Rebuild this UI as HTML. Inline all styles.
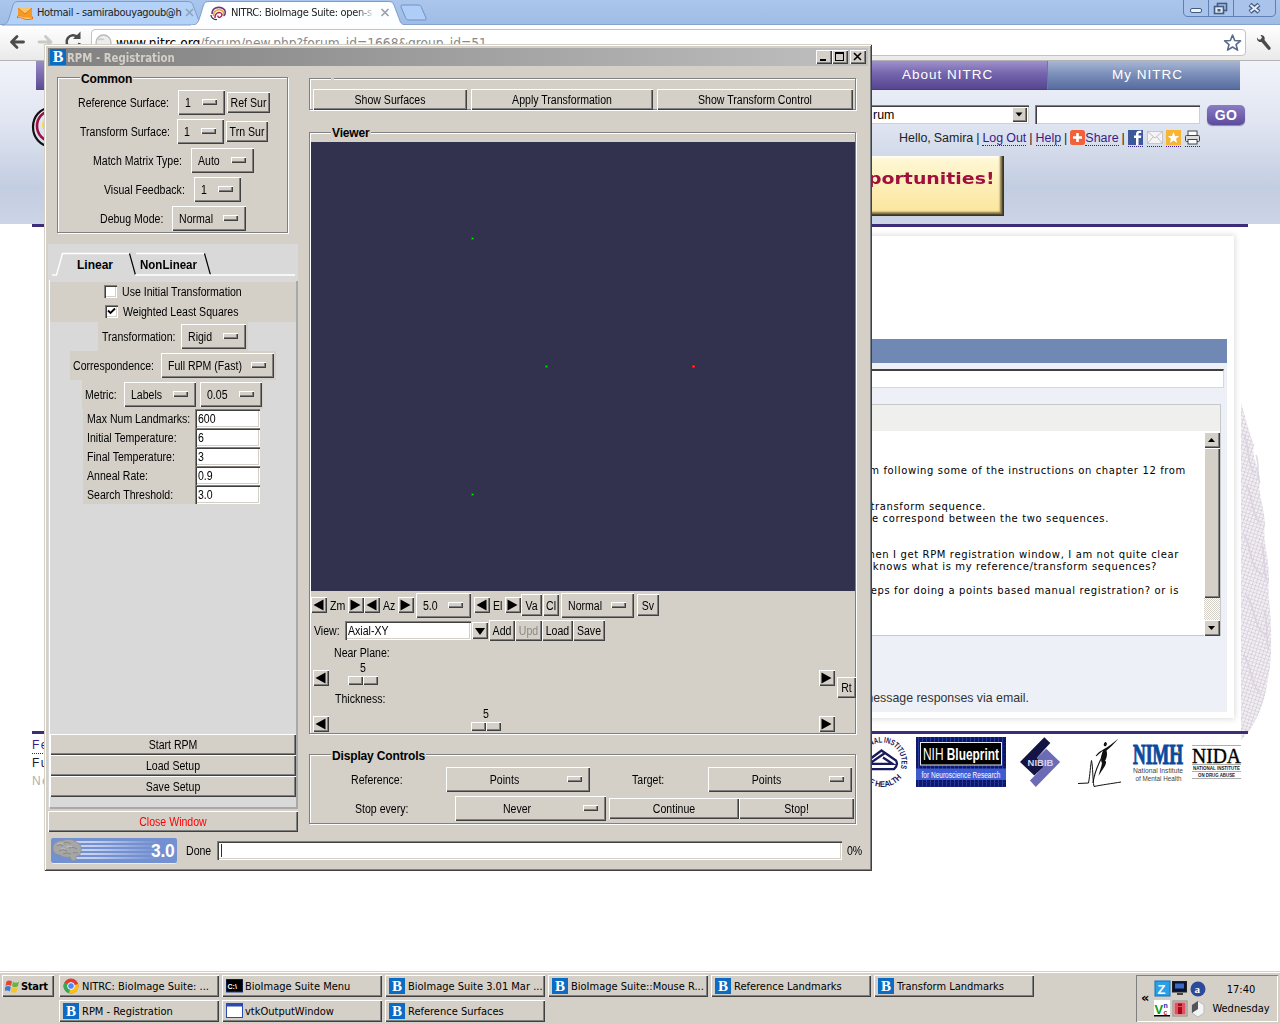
<!DOCTYPE html>
<html><head><meta charset="utf-8"><title>RPM - Registration</title>
<style>
*{box-sizing:border-box;margin:0;padding:0}
html,body{width:1280px;height:1024px;overflow:hidden;background:#fff}
body{position:relative;font-family:"Liberation Sans",sans-serif;font-size:12px;color:#000}
.a{position:absolute}
.t{position:absolute;white-space:nowrap;line-height:14px;height:14px;transform:scaleX(.88);transform-origin:0 50%}
.btn{position:absolute;background:#d4d0c8;box-shadow:inset 1px 1px 0 #fff,inset -1px -1px 0 #404040,inset -2px -2px 0 #808080;white-space:nowrap;overflow:hidden}
.btn span{position:absolute;left:-20px;right:-20px;text-align:center;line-height:14px;transform:scaleX(.88)}
.om{position:absolute;background:#d4d0c8;box-shadow:inset 1px 1px 0 #fff,inset -1px -1px 0 #404040,inset -2px -2px 0 #808080;white-space:nowrap}
.om i{position:absolute;width:15px;height:6px;background:#d4d0c8;box-shadow:inset 1px 1px 0 #fff,inset -1px -1px 0 #404040,inset -2px -2px 0 #808080}
.om span{position:absolute;line-height:14px;transform:scaleX(.88);transform-origin:0 50%}
.om span.c{transform-origin:50% 50%}
.grv{position:absolute;border:1px solid #808080;box-shadow:inset 1px 1px 0 #fff,1px 1px 0 #fff}
.ent{position:absolute;background:#fff;box-shadow:inset 1px 1px 0 #808080,inset 2px 2px 0 #404040,inset -1px -1px 0 #fff,inset -2px -2px 0 #d4d0c8}
.ent span{position:absolute;left:3px;line-height:14px;transform:scaleX(.88);transform-origin:0 50%}
.gl{position:absolute;background:#d4d0c8;font-weight:bold;font-size:12px;line-height:15px;height:15px;padding:0 1px;white-space:nowrap;letter-spacing:-0.15px}
.arr{position:absolute;width:16px;height:16px;background:#d4d0c8;box-shadow:inset 1px 1px 0 #fff,inset -1px -1px 0 #404040,inset -2px -2px 0 #808080}
.arr svg{position:absolute;left:0;top:0}
.tb{position:absolute;background:#d4d0c8;box-shadow:inset 1px 1px 0 #fff,inset -1px -1px 0 #404040,inset -2px -2px 0 #808080;font-family:"DejaVu Sans Condensed","DejaVu Sans",sans-serif;font-size:11px;line-height:20px;white-space:nowrap;overflow:hidden}
.tb b{position:absolute;left:4px;top:3px;width:16px;height:16px;background:#0a6cc4;color:#fff;font:bold 15px/16px "Liberation Serif",serif;text-align:center}
.tb span{position:absolute;left:23px;top:0}
.pg{font-family:"Liberation Sans",sans-serif}
.lnk{color:#3a1a8a;border-bottom:1px dotted #3a1a8a}
</style></head><body>
<!-- browser chrome -->
<div class="a" style="left:0;top:0;width:1280px;height:25px;background:linear-gradient(#abc6ec,#9fbce5)"></div>
<div class="a" style="left:0;top:24px;width:1280px;height:1px;background:#86a3cf"></div>
<div class="a" style="left:0;top:25px;width:1280px;height:36px;background:linear-gradient(#fff,#f4f4f4 50%,#e9e9e9)"></div>
<div class="a" style="left:0;top:60px;width:1280px;height:1px;background:#b4b4b4"></div>
<svg class="a" style="left:0;top:0" width="440" height="26">
<path d="M2 25 C8 24 8 21 10 15 L13 5 C14 2 16 1.5 19 1.5 L187 1.5 C190 1.5 192 2 193 5 L199 21 C200 24 202 25 206 25 Z" fill="#b4d1f8" stroke="#7f9dca" stroke-width="1"/>
<path d="M401 7 C400.5 5.5 401 5 403 5 L418 5 C420 5 421 6 421.5 7.5 L426 18 C426.5 19.5 426 20 424 20 L409 20 C407 20 406 19 405.5 17.5 Z" fill="#aecdf7" stroke="#7391c6" stroke-width="1"/>
<path d="M192 25.5 C198 24.5 198.5 21 200.5 15 L203.5 5 C204.5 2 206.5 1.5 209.5 1.5 L388 1.5 C391 1.5 393 2 394 5 L400 21 C401 24 403 25 409 25.5 Z" fill="#fdfeff" stroke="#7f9dca" stroke-width="1"/>
<rect x="191" y="25" width="220" height="1.6" fill="#fff"/>
<!-- hotmail icon -->
<g transform="translate(17,7)"><path d="M1 1 H15 V10 H1Z" fill="#f59a23"/><path d="M1 1 L8 7 L15 1" fill="#fbc36a" stroke="#e06f10" stroke-width="0.8"/><path d="M0 9 C3 7.5 5 9.5 8 10.5 C11 11.5 13 10 16 9.5 V12 C12 13 10 13.5 7.5 12.5 C5 11.5 3 10.5 0 11.5Z" fill="#f36c0c"/><path d="M1 10 C4 9 6 11 9 11.5 C11 12 13 11 15 10.8" stroke="#ffe08a" stroke-width="0.9" fill="none"/></g>
<!-- nitrc favicon -->
<g transform="translate(210,5)"><path d="M2 9 C2 3 8 1 13 3.5 C16 5 16 9 13.5 11" fill="none" stroke="#6a3a7a" stroke-width="1.6"/><path d="M3.5 11 C3 6 8 3.5 12 5.5 C14 6.5 14 9 12.5 10.5" fill="none" stroke="#e7a53a" stroke-width="1.5"/><path d="M5 13 C4.5 8.5 8.5 6.5 11 8 C12.5 9 12 11 10.5 12 C9 13 7.5 12 8 10.5" fill="none" stroke="#b02050" stroke-width="1.4"/><path d="M1 10 C1 13 4 15 7 14.5" fill="none" stroke="#303030" stroke-width="1.2"/></g>
<!-- close x -->
<path d="M186 9 L193 16 M193 9 L186 16" stroke="#8fa3bf" stroke-width="1.7"/>
<path d="M381.5 9 L388.5 16 M388.5 9 L381.5 16" stroke="#9aa2ad" stroke-width="1.7"/>
</svg>
<div class="t" style="left:37px;top:6px;font:11px/14px 'DejaVu Sans Condensed','DejaVu Sans',sans-serif;transform:none;letter-spacing:-0.35px;color:#222">Hotmail - samirabouyagoub@h</div>
<div class="t" style="left:231px;top:6px;font:11px/14px 'DejaVu Sans Condensed','DejaVu Sans',sans-serif;transform:none;letter-spacing:-0.35px;color:#222;width:147px;overflow:hidden;-webkit-mask-image:linear-gradient(90deg,#000 125px,transparent 145px);mask-image:linear-gradient(90deg,#000 125px,transparent 145px)">NITRC: BioImage Suite: open-s</div>
<svg class="a" style="left:1180px;top:0" width="100" height="20">
<path d="M3.5 0 V12 C3.5 15 5 16.5 8 16.5 H91 C94 16.5 95.5 15 95.5 12 V0" fill="#a9c3ea" stroke="#5f7fb5" stroke-width="1"/>
<path d="M28.5 0 V16 M53.5 0 V16" stroke="#5f7fb5" stroke-width="1"/>
<rect x="10.5" y="8.5" width="11" height="4" rx="1.5" fill="#eef3fb" stroke="#445a80" stroke-width="1"/>
<rect x="37.5" y="3.5" width="9" height="7" fill="none" stroke="#445a80" stroke-width="1.6"/>
<rect x="34.5" y="6.5" width="9" height="7" fill="#dfe8f6" stroke="#445a80" stroke-width="1.6"/>
<rect x="37.5" y="9" width="3" height="2.5" fill="#445a80"/>
<path d="M70 4.5 L79 12 M79 4.5 L70 12" stroke="#445a80" stroke-width="4.4"/>
<path d="M70.5 5 L78.5 11.5 M78.5 5 L70.5 11.5" stroke="#e8eef9" stroke-width="2"/>
</svg>
<svg class="a" style="left:0;top:26px" width="130" height="34">
<path d="M23.5 16 H12.5 M17 10.5 L11.5 16 L17 21.5" fill="none" stroke="#4b4b4b" stroke-width="2.8" stroke-linecap="round" stroke-linejoin="round"/>
<path d="M39 16 H50 M45.5 10.5 L51 16 L45.5 21.5" fill="none" stroke="#c9c9c9" stroke-width="2.8" stroke-linecap="round" stroke-linejoin="round"/>
<path d="M78 11.5 A6.5 6.5 0 1 0 79.5 17" fill="none" stroke="#4b4b4b" stroke-width="2.6"/>
<path d="M80.5 5.5 V13 H73 Z" fill="#4b4b4b"/>
</svg>
<div class="a" style="left:91px;top:29px;width:1155px;height:27px;background:#fff;border:1px solid #c3c3c3;border-radius:4px"></div>
<svg class="a" style="left:95px;top:34px" width="18" height="18"><circle cx="8.5" cy="8.5" r="7.5" fill="#ececec" stroke="#b9b9b9" stroke-width="1.3"/><path d="M3 6 C6 3 7 7 9 5 M5 12 C8 10 9 13 12 11" stroke="#c9c9c9" fill="none" stroke-width="1.5"/></svg>
<div class="t" style="left:116px;top:35px;font:13.65px/16px 'DejaVu Sans Condensed','DejaVu Sans',sans-serif;height:16px;transform:none;color:#000"><span>www.nitrc.org</span><span style='color:#8a8a8a'>/forum/new.php?forum_id=1668&amp;group_id=51</span></div>
<svg class="a" style="left:1222px;top:32px" width="58" height="22">
<path transform="translate(1.3,1.4) scale(.88)" d="M10.5 2 L13 8 L19.5 8.5 L14.5 12.7 L16.2 19 L10.5 15.5 L4.8 19 L6.5 12.7 L1.5 8.5 L8 8 Z" fill="#fff" stroke="#5a6a8c" stroke-width="1.8" stroke-linejoin="round"/>
<g transform="translate(33,2)"><path d="M2 3.5 C1.5 6.5 4 8.5 6.5 8 L13 15.5 C14 16.7 16.5 15 15.5 13.5 L9.5 6 C10.5 3 8.5 0.8 5.5 1 L7 3.5 L5.5 5.5 L3.5 5.5 Z" fill="#4a4a4a"/></g>
</svg>
<!-- web page -->
<div class="a" style="left:0;top:61px;width:1280px;height:163px;background:linear-gradient(#f1f3fa,#e0e5f1 38%,#c3cde1 78%,#ccd4e6)"></div>
<div class="a" style="left:32px;top:224px;width:1216px;height:3px;background:#3d2c78;"></div>
<div class="a" style="left:36px;top:61px;width:20px;height:29px;background:linear-gradient(#9a8bc8,#5a4a94)"></div>
<svg class="a" style="left:28px;top:104px" width="30" height="46"><ellipse cx="22" cy="23" rx="17" ry="19" fill="none" stroke="#111" stroke-width="2.2"/><ellipse cx="23" cy="22" rx="14" ry="15" fill="none" stroke="#9a1040" stroke-width="2.6"/><ellipse cx="24" cy="21" rx="10" ry="9" fill="#f4e020"/></svg>
<div class="a pg" style="left:850px;top:61px;width:197px;height:29px;background:linear-gradient(#9f90cc,#7465ae 45%,#57468f);border-bottom:1px solid #4a3a80"></div>
<div class="a pg" style="left:1047px;top:61px;width:193px;height:29px;background:linear-gradient(#a9b7d6,#7d90ba 45%,#566d9f);border-bottom:1px solid #4a6090;border-left:1px solid #6a78a8"></div>
<div class="t" style="left:902px;top:67px;font:13.5px/16px 'Liberation Sans',sans-serif;height:16px;color:#fff;letter-spacing:1px;transform:none">About NITRC</div>
<div class="t" style="left:1112px;top:67px;font:13.5px/16px 'Liberation Sans',sans-serif;height:16px;color:#fff;letter-spacing:1px;transform:none">My NITRC</div>
<div class="a" style="left:850px;top:105px;width:179px;height:19px;background:#fff;box-shadow:inset 1px 1px 0 #808080,inset 2px 2px 0 #404040,inset -1px -1px 0 #d4d0c8"></div>
<div class="t" style="left:873px;top:108px;font:12.4px/14px 'Liberation Sans',sans-serif;transform:none">rum</div>
<div class="btn" style="left:1012px;top:107px;width:15px;height:15px;box-shadow:inset 1px 1px 0 #fff,inset -1px -1px 0 #404040,inset -2px -2px 0 #808080"><svg class="a" style="left:0;top:0" width="15" height="15"><polygon points="3.5,5.5 10.5,5.5 7,9.5" fill="#000"/></svg></div>
<div class="a" style="left:1035px;top:105px;width:165px;height:19px;background:#fff;box-shadow:inset 1px 1px 0 #808080,inset 2px 2px 0 #404040,inset -1px -1px 0 #d4d0c8"></div>
<div class="a" style="left:1207px;top:105px;width:38px;height:20px;border-radius:5px;background:linear-gradient(#8a7cc4,#5d4c9c);box-shadow:0 1px 1px #8088a8;color:#fff;font:bold 14px/20px 'Liberation Sans',sans-serif;text-align:center;letter-spacing:.3px">GO</div>
<div class="t" style="left:899px;top:131px;font:12.45px/14px 'Liberation Sans',sans-serif;transform:none;color:#222;word-spacing:-0.45px">Hello, Samira | <span class='lnk'>Log Out</span> | <span class='lnk'>Help</span> | <span style='display:inline-block;width:15px'></span><span class='lnk'>Share</span> |</div>
<svg class="a" style="left:1068px;top:128px" width="140" height="20">
<rect x="2" y="2" width="15" height="15" rx="2.5" fill="#f0623a"/><path d="M9.5 5 V14 M5 9.5 H14" stroke="#fff" stroke-width="2.6"/>
<rect x="60" y="2" width="15" height="15" fill="#3b5998"/><path d="M70.5 17 V10 H73 L73.3 7.5 H70.5 V6.3 C70.5 5.4 71 5 72 5 H73.3 V2.8 C72.5 2.7 71.8 2.7 71.3 2.7 C69.3 2.7 68 3.8 68 6 V7.5 H66 V10 H68 V17 Z" fill="#fff"/>
<rect x="79.5" y="3.5" width="15" height="12" fill="#f4f4f4" stroke="#c8c8c8"/><path d="M79.5 3.5 L87 10 L94.5 3.5 M79.5 15.5 L85 9 M94.5 15.5 L89 9" fill="none" stroke="#c0c0c0"/>
<rect x="98" y="2" width="15" height="15" fill="#f7b531"/><path d="M105.5 4 L107 8 L111.3 8.2 L108 10.8 L109.2 15 L105.5 12.6 L101.8 15 L103 10.8 L99.7 8.2 L104 8 Z" fill="#fff"/>
<rect x="120" y="3" width="9" height="5" fill="#fff" stroke="#444"/><rect x="117.5" y="7.5" width="14" height="6" rx="1" fill="#ddd" stroke="#444"/><rect x="120" y="11.5" width="9" height="4.5" fill="#fff" stroke="#444"/>
<path d="M60 18.5 H75 M79 18.5 H95 M98 18.5 H113 M117 18.5 H132" stroke="#3a1a8a" stroke-dasharray="1 1"/>
</svg>
<div class="a" style="left:850px;top:156px;width:154px;height:60px;background:linear-gradient(#fff8d8,#fdf0be 40%,#fbe59a);box-shadow:inset -1px -1px 0 #3a331e,inset -2px -2px 1px #4a4228,inset -4px -4px 2px #85774a,inset 0 2px 2px #fffdf0"></div>
<div class="t" style="left:868px;top:170px;font:bold 15.5px/18px 'DejaVu Sans',sans-serif;height:18px;color:#a0103c;transform:scaleX(1.22);transform-origin:0 50%;letter-spacing:0">portunities!</div>
<div class="a" style="left:850px;top:236px;width:384px;height:482px;background:#fff;box-shadow:0 0 6px 1px #dcdcde"></div>
<div class="a" style="left:850px;top:339px;width:377px;height:373px;background:#edf1f7;"></div>
<div class="a" style="left:850px;top:339px;width:377px;height:24px;background:#7088b4;"></div>
<div class="a" style="left:850px;top:369px;width:374px;height:19px;background:#fff;border:1px solid #d8d8d0;border-top:2px solid #404040"></div>
<div class="a" style="left:850px;top:404px;width:371px;height:232px;background:#fff;border:1px solid #c8c8c8"></div>
<div class="a" style="left:850px;top:405px;width:370px;height:26px;background:#efefed;"></div>
<div class="a" style="left:1204px;top:432px;width:16px;height:204px;background:repeating-conic-gradient(#fff 0 25%,#d4d0c8 0 50%) 0 0/2px 2px"></div>
<div class="btn" style="left:1204px;top:432px;width:16px;height:16px"><svg class="a" style="left:0;top:0" width="16" height="16"><polygon points="4,10 11,10 7.5,6" fill="#000"/></svg></div>
<div class="btn" style="left:1204px;top:448px;width:16px;height:150px"></div>
<div class="btn" style="left:1204px;top:620px;width:16px;height:16px"><svg class="a" style="left:0;top:0" width="16" height="16"><polygon points="4,6 11,6 7.5,10" fill="#000"/></svg></div>
<div class="t" style="right:94px;top:465px;font:10px/12px 'DejaVu Sans',sans-serif;height:12px;letter-spacing:.63px;transform:none;color:#000">I am following some of the instructions on chapter 12 from</div>
<div class="t" style="right:294px;top:501px;font:10px/12px 'DejaVu Sans',sans-serif;height:12px;letter-spacing:.63px;transform:none;color:#000">I load the transform sequence.</div>
<div class="t" style="right:171px;top:513px;font:10px/12px 'DejaVu Sans',sans-serif;height:12px;letter-spacing:.63px;transform:none;color:#000">I have correspond between the two sequences.</div>
<div class="t" style="right:101px;top:549px;font:10px/12px 'DejaVu Sans',sans-serif;height:12px;letter-spacing:.63px;transform:none;color:#000">When I get RPM registration window, I am not quite clear</div>
<div class="t" style="right:123px;top:561px;font:10px/12px 'DejaVu Sans',sans-serif;height:12px;letter-spacing:.63px;transform:none;color:#000">Who knows what is my reference/transform sequences?</div>
<div class="t" style="right:101px;top:585px;font:10px/12px 'DejaVu Sans',sans-serif;height:12px;letter-spacing:.63px;transform:none;color:#000">Steps for doing a points based manual registration? or is</div>
<div class="t" style="right:251px;top:691px;font:12.35px/14px 'Liberation Sans',sans-serif;transform:none;color:#333">Monitor message responses via email.</div>
<svg class="a" style="left:1236px;top:395px" width="44" height="350">
<defs><pattern id="mesh" width="3.5" height="3.5" patternUnits="userSpaceOnUse" patternTransform="rotate(18)"><path d="M0 0 H5 M0 0 V5" stroke="#bdb3c3" stroke-width="0.75" fill="none"/></pattern>
<pattern id="mesh2" width="6" height="4" patternUnits="userSpaceOnUse" patternTransform="rotate(-35)"><path d="M0 0 H6" stroke="#d8ccdd" stroke-width="0.6" fill="none"/></pattern></defs>
<defs><path id="brn" d="M5 8 C9 20 12 35 18 50 C15 60 22 70 24 85 C21 95 28 110 29 130 C26 145 33 160 33 185 C31 200 36 220 35 245 C36 265 32 285 29 300 C25 315 20 325 14 335 L5 345 Z"/></defs>
<use href="#brn" fill="#f3f0f4"/><use href="#brn" fill="url(#mesh)"/><use href="#brn" fill="url(#mesh2)"/>
<path d="M8 40 C14 52 10 66 18 78 M10 90 C18 100 14 118 24 128 M8 140 C16 150 12 170 26 180 M10 200 C20 210 16 232 30 240 M8 260 C16 270 14 290 24 298 M20 60 C24 70 20 80 24 88 M26 150 C30 165 26 175 31 186 M28 215 C33 228 29 245 33 255" fill="none" stroke="#d9cfdd" stroke-width="1.6" opacity=".8"/>
</svg>
<div class="a" style="left:32px;top:731px;width:1216px;height:3px;background:#3d2c78;"></div>
<div class="t" style="left:32px;top:737px;font:12px/16px 'Liberation Sans',sans-serif;height:16px;transform:none;letter-spacing:1.3px"><span class='lnk' style='padding-bottom:1px'>Feedback</span></div>
<div class="t" style="left:32px;top:755px;font:12px/16px 'Liberation Sans',sans-serif;height:16px;transform:none;letter-spacing:1.3px;color:#1a1a2a">Funding</div>
<div class="t" style="left:32px;top:773px;font:12px/16px 'Liberation Sans',sans-serif;height:16px;transform:none;letter-spacing:1.3px;color:#b0b0b0">News</div>
<svg class="a" style="left:850px;top:734px" width="400" height="58">
<defs>
<pattern id="grid" width="4" height="4" patternUnits="userSpaceOnUse"><path d="M0.5 0 V4" stroke="#2a3aa0" stroke-width="1"/><path d="M0 0.5 H4" stroke="#1a2880" stroke-width="0.6"/></pattern></defs>
<!-- NIH seal -->
<path id="nihc" d="M12.5 28 a19.5 19.5 0 1 1 39 0 a19.5 19.5 0 1 1 -39 0" fill="none"/>
<path id="nihd" d="M7 28 a25 25 0 1 0 50 0" fill="none"/>
<text font-family="Liberation Sans,sans-serif" font-size="8.2" font-weight="bold" fill="#1a1a5e"><textPath href="#nihc" startOffset="0" textLength="67.5" lengthAdjust="spacingAndGlyphs">NATIONAL INSTITUTES</textPath></text>
<text font-family="Liberation Sans,sans-serif" font-size="8.2" font-weight="bold" fill="#1a1a5e"><textPath href="#nihd" startOffset="19" textLength="42.5" lengthAdjust="spacingAndGlyphs">OF HEALTH</textPath></text>
<path d="M16 28 L31.5 16.5 L46 26.5 Q48.5 31 44 35.2 L16 35.2 M16 32 L35 19 M33 23.5 L42.5 29.8 L16 29.8" fill="none" stroke="#1a1a5e" stroke-width="2.3"/>
<!-- NIH Blueprint -->
<rect x="66" y="3" width="90" height="50" fill="#0d1660"/><rect x="66" y="3" width="90" height="50" fill="url(#grid)"/>
<rect x="70.5" y="8.5" width="81" height="22.5" fill="#000" stroke="#e8e8f0" stroke-width="1"/>
<text x="73" y="26" font-family="Liberation Sans,sans-serif" font-size="16" fill="#fff" textLength="76" lengthAdjust="spacingAndGlyphs">NIH <tspan font-weight="bold">Blueprint</tspan></text>
<rect x="66" y="34.5" width="90" height="11.5" fill="#3d5cd2"/>
<text x="71.5" y="43.5" font-family="Liberation Sans,sans-serif" font-size="8.5" fill="#fff" textLength="79" lengthAdjust="spacingAndGlyphs">for Neuroscience Research</text>
<!-- NIBIB -->
<path d="M196.3 14.7 L210.1 28 L185.8 53.1 L179.9 46.6 L193.4 32.9 L186.9 23.8 Z" fill="#6c6cb6"/>
<path d="M194.3 3.2 L200.3 9.1 L186.9 23.8 L193.4 32.9 L184.3 41.6 L170 28 Z" fill="#141444"/>
<text x="177.6" y="31.7" font-family="Liberation Sans,sans-serif" font-size="9.2" font-weight="bold" fill="#d4d4ea" textLength="25.8" lengthAdjust="spacingAndGlyphs">NIBIB</text>
<!-- figure -->
<path d="M228 49.5 L238.5 49 C240 41 240.5 31 241.5 26.5 C243 33 242.5 45 244 52.5 C251 51 262 49.5 271 48" fill="none" stroke="#111" stroke-width="1"/>
<path d="M243 49 C244 41 247 33 251 25 M251 25 C252.5 21 253 18 254.5 15.5 M254.5 15.5 C252 16.5 249 18.5 246 22" fill="none" stroke="#111" stroke-width="1.1"/>
<path d="M254 15 C258 13 263 9 268.5 4.5 C264 10 260 13.5 256.5 16.5 C257.5 20 257 24 255 27 C257 27 256 31 253 35 C251 38 249.5 40 248.5 42 C249.5 37 251.5 33 252 29 C250.5 27 251 22 252.5 18 Z" fill="#111"/>
<ellipse cx="255.3" cy="10.2" rx="1.5" ry="2.1" fill="#111" transform="rotate(20 255.3 10.2)"/>
<!-- NIMH -->
<g transform="translate(283,29.5) scale(0.78,1.3)"><text x="0" y="0" font-family="Liberation Serif,serif" font-size="23" font-weight="bold" fill="#0c4a9c" stroke="#0c4a9c" stroke-width="0.9" textLength="64" lengthAdjust="spacingAndGlyphs">NIMH</text></g>
<rect x="327.5" y="17.5" width="2" height="2" fill="#f5a81c"/>
<text x="283" y="39" font-family="Liberation Sans,sans-serif" font-size="7.6" fill="#444" textLength="50" lengthAdjust="spacingAndGlyphs">National Institute</text>
<text x="285.5" y="47" font-family="Liberation Sans,sans-serif" font-size="7.6" fill="#444" textLength="46" lengthAdjust="spacingAndGlyphs">of Mental Health</text>
<!-- NIDA -->
<path d="M342 11.5 H391 M342 30.5 H391 M342 37.5 H391 M342 44.5 H391" stroke="#999" stroke-width="0.8"/>
<text x="342" y="28.5" font-family="Liberation Serif,serif" font-size="22" fill="#000" textLength="49" lengthAdjust="spacingAndGlyphs" stroke="#000" stroke-width="0.4">NIDA</text>
<text x="343" y="36" font-family="Liberation Sans,sans-serif" font-size="4.6" font-weight="bold" fill="#222" textLength="47" lengthAdjust="spacingAndGlyphs">NATIONAL INSTITUTE</text>
<text x="348" y="43" font-family="Liberation Sans,sans-serif" font-size="4.6" font-weight="bold" fill="#222" textLength="37" lengthAdjust="spacingAndGlyphs">ON DRUG ABUSE</text>
</svg>
<!-- TK window -->
<div class="a" style="left:44px;top:44px;width:828px;height:827px;background:#d4d0c8;box-shadow:inset 1px 1px 0 #d4d0c8,inset -1px -1px 0 #404040,inset 2px 2px 0 #fff,inset -2px -2px 0 #808080"></div>
<div class="a" style="left:48px;top:48px;width:820px;height:18px;background:linear-gradient(90deg,#808080,#c0c0c0)"></div>
<div class="a" style="left:50px;top:49px;width:16px;height:16px;background:#0a6cc4;color:#fff;font:bold 16px/16px 'Liberation Serif',serif;text-align:center">B</div>
<div class="t" style="left:67px;top:51px;font:bold 11.5px/14px 'DejaVu Sans','Liberation Sans',sans-serif;color:#d4d0c8;letter-spacing:0;transform:scaleX(.885);transform-origin:0 50%">RPM - Registration</div>
<div class="btn" style="left:816px;top:50px;width:16px;height:14px"><svg class="a" style="left:0;top:0" width="16" height="14"><rect x="4" y="9" width="6" height="2" fill="#000"/></svg></div>
<div class="btn" style="left:832px;top:50px;width:16px;height:14px"><svg class="a" style="left:0;top:0" width="16" height="14"><rect x="3.5" y="3.5" width="8" height="7" fill="none" stroke="#000"/><rect x="3" y="2" width="9" height="2" fill="#000"/></svg></div>
<div class="btn" style="left:850px;top:50px;width:16px;height:14px"><svg class="a" style="left:0;top:0" width="16" height="14"><path d="M4 3 L11 10 M11 3 L4 10" stroke="#000" stroke-width="1.6"/></svg></div>
<div class="grv" style="left:57px;top:77px;width:231px;height:156px"></div>
<div class="gl" style="left:80px;top:72px">Common</div>
<div class="t" style="left:78px;top:96px;">Reference Surface:</div>
<div class="t" style="left:80px;top:125px;">Transform Surface:</div>
<div class="t" style="left:93px;top:154px;">Match Matrix Type:</div>
<div class="t" style="left:104px;top:183px;">Visual Feedback:</div>
<div class="t" style="left:100px;top:212px;">Debug Mode:</div>
<div class="om" style="left:178px;top:90px;width:47px;height:25px"><span class="" style="top:6px;left:7px">1</span><i style="left:24px;top:9px"></i></div>
<div class="btn" style="left:227px;top:92px;width:43px;height:21px;"><span style="top:4px;">Ref Sur</span></div>
<div class="om" style="left:177px;top:119px;width:47px;height:25px"><span class="" style="top:6px;left:7px">1</span><i style="left:24px;top:9px"></i></div>
<div class="btn" style="left:226px;top:121px;width:42px;height:21px;"><span style="top:4px;">Trn Sur</span></div>
<div class="om" style="left:191px;top:148px;width:63px;height:25px"><span class="" style="top:6px;left:7px">Auto</span><i style="left:40px;top:9px"></i></div>
<div class="om" style="left:194px;top:177px;width:47px;height:25px"><span class="" style="top:6px;left:7px">1</span><i style="left:24px;top:9px"></i></div>
<div class="om" style="left:172px;top:206px;width:74px;height:25px"><span class="" style="top:6px;left:7px">Normal</span><i style="left:51px;top:9px"></i></div>
<div class="a" style="left:48px;top:244px;width:250px;height:565px;background:#d9d9d9;"></div>
<div class="a" style="left:296px;top:281px;width:2px;height:528px;background:#a9a9a9;"></div>
<div class="a" style="left:50px;top:807px;width:248px;height:2px;background:#a9a9a9;"></div>
<div class="a" style="left:49px;top:280px;width:1px;height:527px;background:#fff;"></div>
<svg class="a" style="left:48px;top:247px" width="250" height="34">
<polyline points="8.5,28 14.5,6.5 81.5,6.5" fill="none" stroke="#fff" stroke-width="1.4"/>
<polyline points="81.5,6.5 87.5,28" fill="none" stroke="#000" stroke-width="1.2"/>
<polyline points="88,6.5 156,6.5" fill="none" stroke="#fff" stroke-width="1.4"/>
<polyline points="156.5,6.5 162.5,28" fill="none" stroke="#000" stroke-width="1.2"/>
<polyline points="4,28 9,28" fill="none" stroke="#fff" stroke-width="1.4"/>
<polyline points="87,28 247,28" fill="none" stroke="#fff" stroke-width="1.4"/>
</svg>
<div class="t" style="left:77px;top:258px;font-weight:bold;transform:none">Linear</div>
<div class="t" style="left:140px;top:258px;font-weight:bold;transform:scaleX(.96)">NonLinear</div>
<div class="a" style="left:50px;top:282px;width:246px;height:40px;background:#d4d0c8;"></div>
<div class="ent" style="left:104px;top:285px;width:13px;height:13px"></div>
<div class="ent" style="left:105px;top:305px;width:13px;height:13px"><svg class="a" style="left:0;top:0" width="13" height="13"><path d="M3 5.5 L5.5 8 L10 3.5" fill="none" stroke="#000" stroke-width="1.8"/></svg></div>
<div class="t" style="left:122px;top:285px;">Use Initial Transformation</div>
<div class="t" style="left:123px;top:305px;">Weighted Least Squares</div>
<div class="a" style="left:98px;top:322px;width:150px;height:29px;background:#d4d0c8;"></div>
<div class="t" style="left:102px;top:330px;">Transformation:</div>
<div class="om" style="left:181px;top:324px;width:65px;height:25px"><span class="" style="top:6px;left:7px">Rigid</span><i style="left:42px;top:9px"></i></div>
<div class="a" style="left:70px;top:351px;width:206px;height:29px;background:#d4d0c8;"></div>
<div class="t" style="left:73px;top:359px;">Correspondence:</div>
<div class="om" style="left:161px;top:353px;width:113px;height:25px"><span class="" style="top:6px;left:7px">Full RPM (Fast)</span><i style="left:90px;top:9px"></i></div>
<div class="a" style="left:82px;top:380px;width:181px;height:29px;background:#d4d0c8;"></div>
<div class="t" style="left:85px;top:388px;">Metric:</div>
<div class="om" style="left:124px;top:382px;width:72px;height:25px"><span class="" style="top:6px;left:7px">Labels</span><i style="left:49px;top:9px"></i></div>
<div class="om" style="left:200px;top:382px;width:62px;height:25px"><span class="" style="top:6px;left:7px">0.05</span><i style="left:39px;top:9px"></i></div>
<div class="a" style="left:83px;top:409px;width:177px;height:95px;background:#d4d0c8;"></div>
<div class="t" style="left:87px;top:412px;">Max Num Landmarks:</div>
<div class="ent" style="left:195px;top:409px;width:65px;height:19px"><span style="top:3px">600</span></div>
<div class="t" style="left:87px;top:431px;">Initial Temperature:</div>
<div class="ent" style="left:195px;top:428px;width:65px;height:19px"><span style="top:3px">6</span></div>
<div class="t" style="left:87px;top:450px;">Final Temperature:</div>
<div class="ent" style="left:195px;top:447px;width:65px;height:19px"><span style="top:3px">3</span></div>
<div class="t" style="left:87px;top:469px;">Anneal Rate:</div>
<div class="ent" style="left:195px;top:466px;width:65px;height:19px"><span style="top:3px">0.9</span></div>
<div class="t" style="left:87px;top:488px;">Search Threshold:</div>
<div class="ent" style="left:195px;top:485px;width:65px;height:19px"><span style="top:3px">3.0</span></div>
<div class="btn" style="left:50px;top:734px;width:246px;height:21px;"><span style="top:4px;">Start RPM</span></div>
<div class="btn" style="left:50px;top:755px;width:246px;height:21px;"><span style="top:4px;">Load Setup</span></div>
<div class="btn" style="left:50px;top:776px;width:246px;height:21px;"><span style="top:4px;">Save Setup</span></div>
<div class="btn" style="left:48px;top:811px;width:250px;height:21px;"><span style="top:4px;color:#f00">Close Window</span></div>
<div class="a" style="left:51px;top:838px;width:126px;height:26px;background:#7390d1;border-radius:2px;box-shadow:inset 0 -1px 0 #e8ecf6;overflow:hidden"><div class="a" style="left:24px;top:3px;width:90px;height:20px;background:repeating-linear-gradient(#c6d2ef 0,#c6d2ef 1.6px,transparent 1.6px,transparent 4.1px);-webkit-mask-image:linear-gradient(90deg,#000 20%,transparent 95%);mask-image:linear-gradient(90deg,#000 20%,transparent 95%)"></div><svg class="a" style="left:0;top:0" width="126" height="26"><path d="M2 11 C1 6 6 2 12 2.5 C16 0.5 22 1 25 4 C29 5 31 9 30 13 C30 16 28 18 25 18.5 L25 21 C24 23.5 21 23.5 20 21.5 L19 19 C15 20 11 19 9 17 C5 17 2 14 2 11Z" fill="#a6a6a6" stroke="#8f8f8f" stroke-width="0.8"/><path d="M6 8 Q9 5 12 8 M13 5 Q17 3 20 6 M8 13 Q12 10 16 13 M18 10 Q22 8 26 11 M12 16 Q16 14 20 16 M22 15 Q24 14 27 15" fill="none" stroke="#848484" stroke-width="0.9"/><path d="M7 6 Q10 4 12 6 M15 9 Q18 7 21 9 M10 11 Q12 9 14 11" fill="none" stroke="#c4c4c4" stroke-width="0.9"/></svg><div class="a" style="left:100px;top:2px;font:bold 17.5px/22px 'Liberation Sans',sans-serif;color:#fff;letter-spacing:-0.3px">3.0</div></div>
<div class="t" style="left:186px;top:844px;">Done</div>
<div class="ent" style="left:217px;top:841px;width:625px;height:19px"><span style="top:3px"></span></div>
<div class="a" style="left:221px;top:844px;width:1px;height:13px;background:#1a1ad0;"></div>
<div class="t" style="left:847px;top:844px;">0%</div>
<div class="grv" style="left:309px;top:78px;width:547px;height:32px"></div>
<div class="a" style="left:331px;top:77px;width:3px;height:3px;background:#d4d0c8;"></div>
<div class="btn" style="left:313px;top:89px;width:154px;height:21px;"><span style="top:4px;">Show Surfaces</span></div>
<div class="btn" style="left:471px;top:89px;width:182px;height:21px;"><span style="top:4px;">Apply Transformation</span></div>
<div class="btn" style="left:657px;top:89px;width:196px;height:21px;"><span style="top:4px;">Show Transform Control</span></div>
<div class="grv" style="left:309px;top:132px;width:547px;height:602px"></div>
<div class="gl" style="left:331px;top:126px">Viewer</div>
<div class="a" style="left:311px;top:142px;width:544px;height:449px;background:#33324e;"></div>
<div class="a" style="left:471px;top:237px;width:3px;height:3px;background:#f00;"></div>
<div class="a" style="left:472px;top:238px;width:1px;height:1px;background:#0f0;"></div>
<div class="a" style="left:545px;top:365px;width:3px;height:3px;background:#f00;"></div>
<div class="a" style="left:546px;top:366px;width:1px;height:1px;background:#0f0;"></div>
<div class="a" style="left:692px;top:365px;width:3px;height:3px;background:#f00;"></div>
<div class="a" style="left:693px;top:366px;width:1px;height:1px;background:#0f0;"></div>
<div class="a" style="left:471px;top:493px;width:3px;height:3px;background:#f00;"></div>
<div class="a" style="left:472px;top:494px;width:1px;height:1px;background:#0f0;"></div>
<div class="arr" style="left:311px;top:597px"><svg width="16" height="16"><polygon points="2.5,8 12.5,2.5 12.5,13.5" fill="#000"/></svg></div>
<div class="t" style="left:330px;top:599px;">Zm</div>
<div class="arr" style="left:348px;top:597px"><svg width="16" height="16"><polygon points="12.5,8 2.5,2.5 2.5,13.5" fill="#000"/></svg></div>
<div class="arr" style="left:364px;top:597px"><svg width="16" height="16"><polygon points="2.5,8 12.5,2.5 12.5,13.5" fill="#000"/></svg></div>
<div class="t" style="left:383px;top:599px;">Az</div>
<div class="arr" style="left:398px;top:597px"><svg width="16" height="16"><polygon points="12.5,8 2.5,2.5 2.5,13.5" fill="#000"/></svg></div>
<div class="om" style="left:416px;top:593px;width:55px;height:25px"><span class="" style="top:6px;left:7px">5.0</span><i style="left:32px;top:9px"></i></div>
<div class="arr" style="left:474px;top:597px"><svg width="16" height="16"><polygon points="2.5,8 12.5,2.5 12.5,13.5" fill="#000"/></svg></div>
<div class="t" style="left:493px;top:599px;">El</div>
<div class="arr" style="left:505px;top:597px"><svg width="16" height="16"><polygon points="12.5,8 2.5,2.5 2.5,13.5" fill="#000"/></svg></div>
<div class="btn" style="left:521px;top:594px;width:21px;height:22px;"><span style="top:5px;">Va</span></div>
<div class="btn" style="left:543px;top:594px;width:16px;height:22px;"><span style="top:5px;">Cl</span></div>
<div class="om" style="left:561px;top:593px;width:73px;height:25px"><span class="" style="top:6px;left:7px">Normal</span><i style="left:50px;top:9px"></i></div>
<div class="btn" style="left:637px;top:594px;width:22px;height:22px;"><span style="top:5px;">Sv</span></div>
<div class="t" style="left:314px;top:624px;">View:</div>
<div class="ent" style="left:345px;top:621px;width:126px;height:19px"><span style="top:3px">Axial-XY</span></div>
<div class="arr" style="left:472px;top:622px;height:17px"><svg width="16" height="17"><polygon points="3,6 13,6 8,13" fill="#000"/></svg></div>
<div class="btn" style="left:489px;top:620px;width:26px;height:21px;"><span style="top:4px;">Add</span></div>
<div class="btn" style="left:515px;top:620px;width:27px;height:21px;"><span style="top:4px;color:#8a8a8a">Upd</span></div>
<div class="btn" style="left:542px;top:620px;width:31px;height:21px;"><span style="top:4px;">Load</span></div>
<div class="btn" style="left:573px;top:620px;width:32px;height:21px;"><span style="top:4px;">Save</span></div>
<div class="t" style="left:334px;top:646px;">Near Plane:</div>
<div class="t" style="left:360px;top:661px;">5</div>
<div class="arr" style="left:313px;top:670px"><svg width="16" height="16"><polygon points="2.5,8 12.5,2.5 12.5,13.5" fill="#000"/></svg></div>
<div class="arr" style="left:819px;top:670px"><svg width="16" height="16"><polygon points="12.5,8 2.5,2.5 2.5,13.5" fill="#000"/></svg></div>
<div class="btn" style="left:348px;top:676px;width:15px;height:9px"></div><div class="btn" style="left:363px;top:676px;width:15px;height:9px"></div>
<div class="btn" style="left:837px;top:677px;width:19px;height:21px;"><span style="top:4px;">Rt</span></div>
<div class="t" style="left:335px;top:692px;">Thickness:</div>
<div class="t" style="left:483px;top:707px;">5</div>
<div class="arr" style="left:313px;top:716px"><svg width="16" height="16"><polygon points="2.5,8 12.5,2.5 12.5,13.5" fill="#000"/></svg></div>
<div class="arr" style="left:819px;top:716px"><svg width="16" height="16"><polygon points="12.5,8 2.5,2.5 2.5,13.5" fill="#000"/></svg></div>
<div class="btn" style="left:471px;top:722px;width:15px;height:9px"></div><div class="btn" style="left:486px;top:722px;width:15px;height:9px"></div>
<div class="grv" style="left:309px;top:754px;width:547px;height:70px"></div>
<div class="gl" style="left:331px;top:749px">Display Controls</div>
<div class="t" style="left:351px;top:773px;">Reference:</div>
<div class="om" style="left:446px;top:767px;width:144px;height:25px"><span class="c" style="top:6px;left:0;width:117px;text-align:center">Points</span><i style="left:121px;top:9px"></i></div>
<div class="t" style="left:632px;top:773px;">Target:</div>
<div class="om" style="left:708px;top:767px;width:144px;height:25px"><span class="c" style="top:6px;left:0;width:117px;text-align:center">Points</span><i style="left:121px;top:9px"></i></div>
<div class="t" style="left:355px;top:802px;">Stop every:</div>
<div class="om" style="left:455px;top:796px;width:151px;height:25px"><span class="c" style="top:6px;left:0;width:124px;text-align:center">Never</span><i style="left:128px;top:9px"></i></div>
<div class="btn" style="left:609px;top:798px;width:130px;height:21px;"><span style="top:4px;">Continue</span></div>
<div class="btn" style="left:739px;top:798px;width:115px;height:21px;"><span style="top:4px;">Stop!</span></div>
<!-- taskbar -->
<div class="a" style="left:0;top:971px;width:1280px;height:53px;background:#d4d0c8;box-shadow:inset 0 1px 0 #d4d0c8,inset 0 2px 0 #fff"></div>
<div class="tb" style="left:2px;top:975px;width:52px;height:22px"><svg class="a" style="left:3px;top:3px" width="16" height="16"><path d="M1.5 3.5 C3.5 2 5.5 2.5 7 3.5 L6 8 C4.5 7 2.5 6.5 0.5 8 Z" fill="#e8432b"/><path d="M8 3.8 C10 5 12 5 14 3.5 L13 8 C11 9.5 9 9.5 7 8.3 Z" fill="#6ab43e"/><path d="M0.3 9 C2.3 7.5 4.3 8 5.8 9 L4.8 13.5 C3.3 12.5 1.3 12 -0.7 13.5 Z" fill="#3a7bd8"/><path d="M6.8 9.3 C8.8 10.5 10.8 10.5 12.8 9 L11.8 13.5 C9.8 15 7.8 15 5.8 13.8 Z" fill="#f5c52c"/></svg><span style="left:19px;top:2px;font-weight:bold;letter-spacing:-0.3px">Start</span></div>
<div class="tb" style="left:59px;top:975px;height:22px;width:160px"><svg class="a" style="left:4px;top:3px" width="16" height="16"><circle cx="8" cy="8" r="7.5" fill="#e33b2e"/><path d="M8 8 L1.5 4.3 A7.5 7.5 0 0 0 6 15.2 Z" fill="#3aa757"/><path d="M8 8 L6 15.2 A7.5 7.5 0 0 0 15.3 6 Z" fill="#fbc116"/><circle cx="8" cy="8" r="3.4" fill="#4a8af4" stroke="#fff" stroke-width="1"/></svg><span style="top:2px">NITRC: BioImage Suite: ...</span></div>
<div class="tb" style="left:222px;top:975px;height:22px;width:160px"><svg class="a" style="left:4px;top:4px" width="17" height="14"><rect x="0" y="0" width="17" height="13" fill="#000" stroke="#1a3a8a" stroke-width="1"/><text x="1.5" y="9.5" font-family="Liberation Sans,sans-serif" font-size="7" font-weight="bold" fill="#fff">C:\</text></svg><span style="top:2px">BioImage Suite Menu</span></div>
<div class="tb" style="left:385px;top:975px;height:22px;width:160px"><b>B</b><span style="top:2px">BioImage Suite 3.01 Mar ...</span></div>
<div class="tb" style="left:548px;top:975px;height:22px;width:160px"><b>B</b><span style="top:2px">BioImage Suite::Mouse R...</span></div>
<div class="tb" style="left:711px;top:975px;height:22px;width:160px"><b>B</b><span style="top:2px">Reference Landmarks</span></div>
<div class="tb" style="left:874px;top:975px;height:22px;width:160px"><b>B</b><span style="top:2px">Transform Landmarks</span></div>
<div class="tb" style="left:59px;top:1000px;height:22px;width:160px"><b>B</b><span style="top:2px">RPM - Registration</span></div>
<div class="tb" style="left:222px;top:1000px;height:22px;width:160px"><svg class="a" style="left:4px;top:3px" width="17" height="15"><rect x="0.5" y="0.5" width="16" height="14" fill="#fff" stroke="#2a4ab0"/><rect x="0.5" y="0.5" width="16" height="3" fill="#2a4ab0"/></svg><span style="top:2px">vtkOutputWindow</span></div>
<div class="tb" style="left:385px;top:1000px;height:22px;width:160px"><b>B</b><span style="top:2px">Reference Surfaces</span></div>
<div class="a" style="left:1136px;top:975px;width:142px;height:47px;box-shadow:inset 1px 1px 0 #808080,inset -1px -1px 0 #fff"></div>
<div class="t" style="left:1141px;top:991px;font:bold 13px/14px 'DejaVu Sans',sans-serif;transform:none">«</div>
<div class="t" style="left:1207px;width:68px;text-align:center;top:983px;font:11px/14px 'DejaVu Sans Condensed','DejaVu Sans',sans-serif;transform:none">17:40</div>
<div class="t" style="left:1207px;width:68px;text-align:center;top:1002px;font:11px/14px 'DejaVu Sans Condensed','DejaVu Sans',sans-serif;transform:none">Wednesday</div>
<svg class="a" style="left:1154px;top:980px" width="54" height="42">
<rect x="1" y="1" width="15" height="15" fill="#2aa0e8" stroke="#1070b8"/><text x="3.5" y="13.5" font-family="Liberation Sans,sans-serif" font-size="13" font-weight="bold" fill="#fff">Z</text>
<rect x="18.5" y="1.5" width="14" height="10.5" fill="#0a1230" stroke="#222"/><rect x="21" y="3.5" width="9" height="5" fill="#3a6ac8"/><rect x="23" y="13" width="6" height="2" fill="#444"/>
<circle cx="44" cy="9" r="7.5" fill="#2a4a9a"/><text x="40.5" y="13" font-family="Liberation Serif,serif" font-size="11" font-weight="bold" fill="#fff">a</text>
<rect x="0" y="20" width="16" height="15" fill="#fff"/><rect x="0" y="35" width="16" height="1.5" fill="#000"/><text x="0.5" y="33.5" font-family="Liberation Sans,sans-serif" font-size="13" font-weight="bold" fill="#109a10">V</text><text x="9.5" y="28" font-family="Liberation Sans,sans-serif" font-size="7" font-weight="bold" fill="#22a">n</text><text x="9.5" y="35" font-family="Liberation Sans,sans-serif" font-size="7" font-weight="bold" fill="#c22">c</text>
<rect x="19" y="21" width="14" height="15" fill="#d4d0c8" stroke="#8a8a8a"/><rect x="20.5" y="22.5" width="11" height="12" fill="#e4505c"/><rect x="24" y="27" width="4" height="7" fill="#a00a1c"/><rect x="24" y="23.5" width="4" height="2.5" fill="#a00a1c"/>
<path d="M44 21 L50 25 L50 33 L44 37 L38 33 L38 25 Z" fill="#f4f4f4" stroke="#bbb"/><path d="M44 21 L38 25 L38 33 L44 29 Z" fill="#555"/>
</svg>
</body></html>
